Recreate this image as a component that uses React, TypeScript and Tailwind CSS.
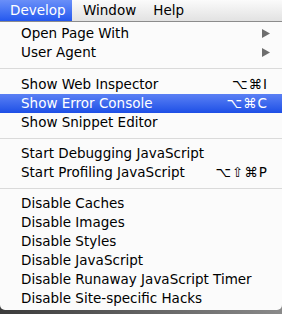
import React from "react"

type Item =
  | { kind: "item"; label: string; shortcut?: string; submenu?: boolean; active?: boolean }
  | { kind: "sep"; h: string }

const items: Item[] = [
  { kind: "item", label: "Open Page With", submenu: true },
  { kind: "item", label: "User Agent", submenu: true },
  { kind: "sep", h: "h-[13px]" },
  { kind: "item", label: "Show Web Inspector", shortcut: "⌥⌘I" },
  { kind: "item", label: "Show Error Console", shortcut: "⌥⌘C", active: true },
  { kind: "item", label: "Show Snippet Editor" },
  { kind: "sep", h: "h-[12px]" },
  { kind: "item", label: "Start Debugging JavaScript" },
  { kind: "item", label: "Start Profiling JavaScript", shortcut: "⌥⇧⌘P" },
  { kind: "sep", h: "h-[12px]" },
  { kind: "item", label: "Disable Caches" },
  { kind: "item", label: "Disable Images" },
  { kind: "item", label: "Disable Styles" },
  { kind: "item", label: "Disable JavaScript" },
  { kind: "item", label: "Disable Runaway JavaScript Timer" },
  { kind: "item", label: "Disable Site-specific Hacks" },
]

function SubArrow() {
  return (
    <svg width="8" height="9" viewBox="0 0 8 9" className="mr-[-2px]">
      <polygon points="0,0 8,4.5 0,9" fill="#6e6e6e" />
    </svg>
  )
}

export default function App() {
  return (
    <div className="relative w-[282px] h-[314px] overflow-hidden bg-gradient-to-r from-[#3c3c3c] to-[#8a8a8a] font-['DejaVu_Sans',sans-serif] text-[13.5px] text-black">
      {/* menu bar */}
      <div className="flex h-[22px] items-stretch border-b border-[#8c8c8c] bg-gradient-to-b from-[#fbfbfb] to-[#e2e2e2]">
        <div className="flex w-[72px] items-center bg-gradient-to-b from-[#6a8ff8] to-[#2457ee] pl-[10px] text-white">
          Develop
        </div>
        <div className="flex items-center pl-[11px]">Window</div>
        <div className="flex items-center pl-[17px]">Help</div>
      </div>

      {/* dropdown */}
      <div className="flex flex-col rounded-b-[5px] bg-[#fbfbfb] pt-[2px] pb-[2px]">
        {items.map((it, i) =>
          it.kind === "sep" ? (
            <div key={i} className={`flex items-center ${it.h}`}>
              <div className="h-px w-full bg-[#dadada]" />
            </div>
          ) : (
            <div
              key={i}
              className={`flex h-[19px] items-center justify-between pl-[21px] pr-[14px] ${
                it.active ? "bg-gradient-to-b from-[#5b80f4] to-[#1d4ee6] text-white" : ""
              }`}
            >
              <span className="whitespace-nowrap">{it.label}</span>
              {it.shortcut && <span className="tracking-[1px]">{it.shortcut}</span>}
              {it.submenu && <SubArrow />}
            </div>
          )
        )}
      </div>
    </div>
  )
}
